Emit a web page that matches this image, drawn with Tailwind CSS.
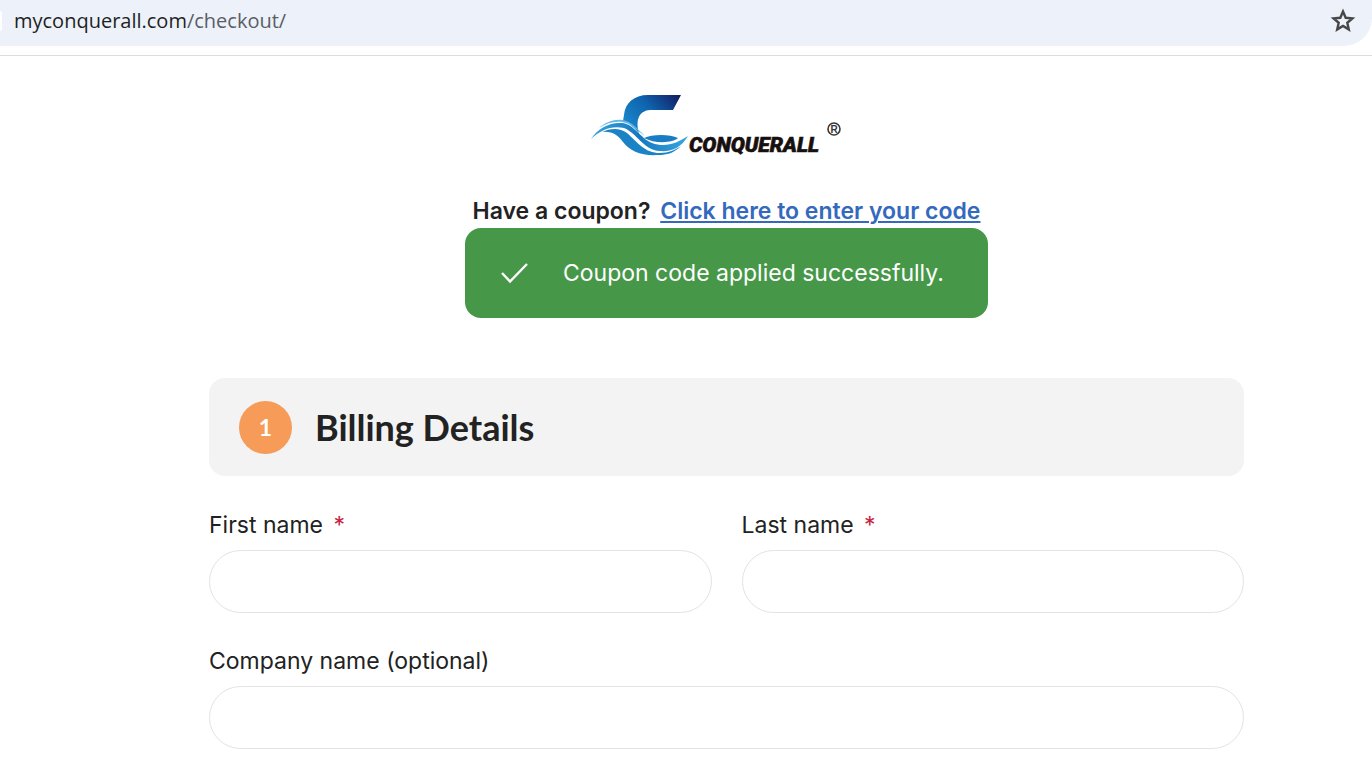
<!DOCTYPE html>
<html lang="en">
<head>
  <meta charset="UTF-8">
  <meta name="viewport" content="width=device-width, initial-scale=1.0">
  <title>Checkout</title>
  <script src="https://cdn.jsdelivr.net/npm/@tailwindcss/browser@4"></script>
</head>
<body class="bg-white text-[#222222] font-['Inter',sans-serif]">
  <!-- Address bar -->
  <div class="h-14 border-b border-[#dddddd]">
    <div class="h-[46px] bg-[#ecf1fa] rounded-br-[28px] flex items-center justify-between pr-4 pb-1">
      <div class="flex items-center gap-3">
        <div class="w-[2px] h-5 bg-white rounded-r-full"></div>
        <span class="text-[20px] leading-6 text-[#1f1f1f] font-['Open_Sans',sans-serif]">myconquerall.com<span class="text-[#5a5e64]">/checkout/</span></span>
      </div>
      <button type="button" aria-label="Bookmark this page">
        <svg class="w-[26px] h-[26px]" viewBox="0 0 26 26" fill="none" stroke="#474747" stroke-width="2.4">
          <path d="M13 3.6l2.7 6.2 6.7.6-5.1 4.4 1.5 6.6L13 17.9l-5.8 3.5 1.5-6.6-5.1-4.4 6.7-.6z"/>
        </svg>
      </button>
    </div>
  </div>

  <main class="pl-[209px] pr-32 pt-[39px]">
    <!-- Logo -->
    <a href="/" aria-label="Conquerall" class="block w-[271px] mx-auto">
      <svg class="w-[271px] h-[60px] overflow-visible" viewBox="0 0 271 60">
        <defs>
          <linearGradient id="letter" x1="0" y1="0.6" x2="1" y2="0">
            <stop offset="0" stop-color="#1a84c8"/>
            <stop offset="0.45" stop-color="#0e64ae"/>
            <stop offset="1" stop-color="#141a5e"/>
          </linearGradient>
          <linearGradient id="wave" x1="0" y1="0" x2="1" y2="0">
            <stop offset="0" stop-color="#3ba3dc"/>
            <stop offset="0.5" stop-color="#1678c0"/>
            <stop offset="1" stop-color="#3ba6de"/>
          </linearGradient>
        </defs>
        <path fill="url(#letter)" d="M90 0H57C43 0 34 8 33 20L32 26C39 28 43 33 48 38C45 28 46 16 59 15H82Z"/>
        <path fill="#1a7cc2" d="M53 43C61 39 79 39 87 43C82 48 64 49 53 43Z"/>
        <path fill="#63b8e6" d="M8 33C15 27 23 24 31 25C41 26 46 34 54 41C45 35 40 28 31 27C23 26 16 28 8 33Z"/>
        <path fill="url(#wave)" d="M0 44C7 33 19 27 31 28C43 29 49 43 61 48C75 53 86 48 97 41C90 53 80 57 69 56C52 55 46 38 33 33C21 30 9 35 0 44Z"/>
        <path fill="#1b82c6" d="M11 37C20 33 29 33 36 38C47 48 54 58 69 58C78 58 84 55 90 51C83 58 76 60 67 60C50 61 39 56 32 47C27 40 21 36 11 37Z"/>
        <text x="98" y="57" font-family="Roboto, sans-serif" font-size="21" font-weight="900" font-style="italic" fill="#17100f" stroke="#17100f" stroke-width="0.6">CONQUERALL</text>
        <circle cx="243" cy="34" r="6" fill="none" stroke="#3c3838" stroke-width="1.6"/>
        <text x="243" y="38" text-anchor="middle" font-family="Liberation Sans, sans-serif" font-size="10" font-weight="700" fill="#3c3838">R</text>
      </svg>
    </a>

    <!-- Coupon -->
    <p class="mt-10 text-center text-[23px] leading-8 font-semibold">
      Have a coupon? <a href="#coupon" class="ml-1 text-[#3469bd] underline decoration-2 underline-offset-2">Click here to enter your code</a>
    </p>
    <div role="alert" class="mt-px w-[523px] h-[90px] mx-auto bg-[#469848] rounded-2xl px-9 flex items-center gap-[35px] text-white">
      <svg class="w-[27px] h-[22px] shrink-0" viewBox="0 0 27 22" fill="none" stroke="currentColor" stroke-width="2.4">
        <path d="M1 11l8 8.5L26 2"/>
      </svg>
      <span class="text-[23px] leading-8 whitespace-nowrap">Coupon code applied successfully.</span>
    </div>

    <!-- Billing form -->
    <form class="mt-15">
      <div class="h-[98px] bg-[#f3f3f3] rounded-2xl px-[30px] flex items-center gap-[23px]">
        <span class="size-[53px] shrink-0 rounded-full bg-[#f79b59] text-white text-[23px] leading-8 font-bold font-['Lato',sans-serif] flex items-center justify-center">1</span>
        <h2 class="text-[36px] leading-[44px] font-bold font-['Lato',sans-serif]">Billing Details</h2>
      </div>

      <div class="mt-[33px] grid grid-cols-2 gap-x-[30px] gap-y-8">
        <div>
          <label for="firstName" class="block text-[23px] leading-8">First name <span class="ml-1 text-[#c8233f]">*</span></label>
          <input type="text" id="firstName" required class="mt-[9px] block w-full h-[63px] px-7 text-[23px] border border-[#e3e3e3] rounded-full shadow-none">
        </div>
        <div>
          <label for="lastName" class="block text-[23px] leading-8">Last name <span class="ml-1 text-[#c8233f]">*</span></label>
          <input type="text" id="lastName" required class="mt-[9px] block w-full h-[63px] px-7 text-[23px] border border-[#e3e3e3] rounded-full shadow-none">
        </div>
        <div class="col-span-2">
          <label for="company" class="block text-[23px] leading-8">Company name (optional)</label>
          <input type="text" id="company" class="mt-[9px] block w-full h-[63px] px-7 text-[23px] border border-[#e3e3e3] rounded-full">
        </div>
      </div>
    </form>
  </main>
</body>
</html>
